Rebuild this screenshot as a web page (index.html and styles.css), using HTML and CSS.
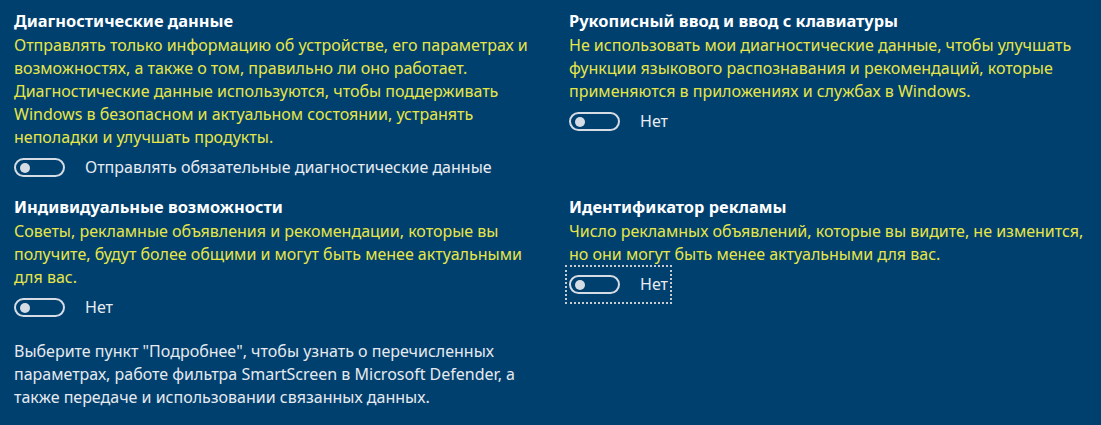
FILE: index.html
```html
<!DOCTYPE html>
<html lang="ru">
<head>
    <meta charset="UTF-8">
    <meta name="viewport" content="width=device-width, initial-scale=1.0">
    <title>Конфиденциальность</title>
    <link rel="stylesheet" href="styles.css">
</head>
<body>
    <div class="settings">
        <section class="option">
            <h2>Диагностические данные</h2>
            <p class="desc">Отправлять только информацию об устройстве, его параметрах и возможностях, а также о том, правильно ли оно работает. Диагностические данные используются, чтобы поддерживать Windows в безопасном и актуальном состоянии, устранять неполадки и улучшать продукты.</p>
            <div class="switch-row">
                <span class="toggle"></span>
                <span class="switch-label">Отправлять обязательные диагностические данные</span>
            </div>
        </section>

        <section class="option">
            <h2>Рукописный ввод и ввод с клавиатуры</h2>
            <p class="desc">Не использовать мои диагностические данные, чтобы улучшать функции языкового распознавания и рекомендаций, которые применяются в приложениях и службах в Windows.</p>
            <div class="switch-row">
                <span class="toggle"></span>
                <span class="switch-label">Нет</span>
            </div>
        </section>

        <section class="option">
            <h2>Индивидуальные возможности</h2>
            <p class="desc">Советы, рекламные объявления и рекомендации, которые вы получите, будут более общими и могут быть менее актуальными для вас.</p>
            <div class="switch-row">
                <span class="toggle"></span>
                <span class="switch-label">Нет</span>
            </div>
            <p class="note">Выберите пункт "Подробнее", чтобы узнать о перечисленных параметрах, работе фильтра SmartScreen в Microsoft Defender, а также передаче и использовании связанных данных.</p>
        </section>

        <section class="option">
            <h2>Идентификатор рекламы</h2>
            <p class="desc">Число рекламных объявлений, которые вы видите, не изменится, но они могут быть менее актуальными для вас.</p>
            <div class="switch-row focused">
                <span class="toggle"></span>
                <span class="switch-label">Нет</span>
            </div>
        </section>
    </div>
</body>
</html>
```

FILE: styles.css
```css
body {
    margin: 0;
    padding: 8px 0 0 14px;
    background: #00406f;
    font-family: 'Noto Sans', 'Open Sans', sans-serif;
    font-size: 16px;
    line-height: 23px;
    color: #ffffff;
    overflow: hidden;
}
.settings {
    display: grid;
    grid-template-columns: 535px 532px;
    column-gap: 20px;
    row-gap: 8px;
}
h2 {
    margin: 0;
    font-size: 16.4px;
    font-weight: 700;
    line-height: 26px;
    color: #ffffff;
}
.desc {
    margin: 0;
    color: #e8e646;
}
.switch-row {
    display: flex;
    align-items: center;
    gap: 20px;
    height: 37px;
    color: #e8ecf0;
}
.switch-row.focused {
    width: fit-content;
    margin-left: -3px;
    padding: 0 3px;
    outline: 2px dotted #c8ccd0;
    outline-offset: -1px;
}
.toggle {
    position: relative;
    width: 47px;
    height: 15px;
    border: 2px solid #d6dce4;
    border-radius: 10px;
}
.toggle::after {
    content: "";
    position: absolute;
    left: 4px;
    top: 2.5px;
    width: 10px;
    height: 10px;
    border-radius: 50%;
    background: #d6dce4;
}
.note {
    margin: 14px 0 0;
    color: #e6eaee;
}
```
